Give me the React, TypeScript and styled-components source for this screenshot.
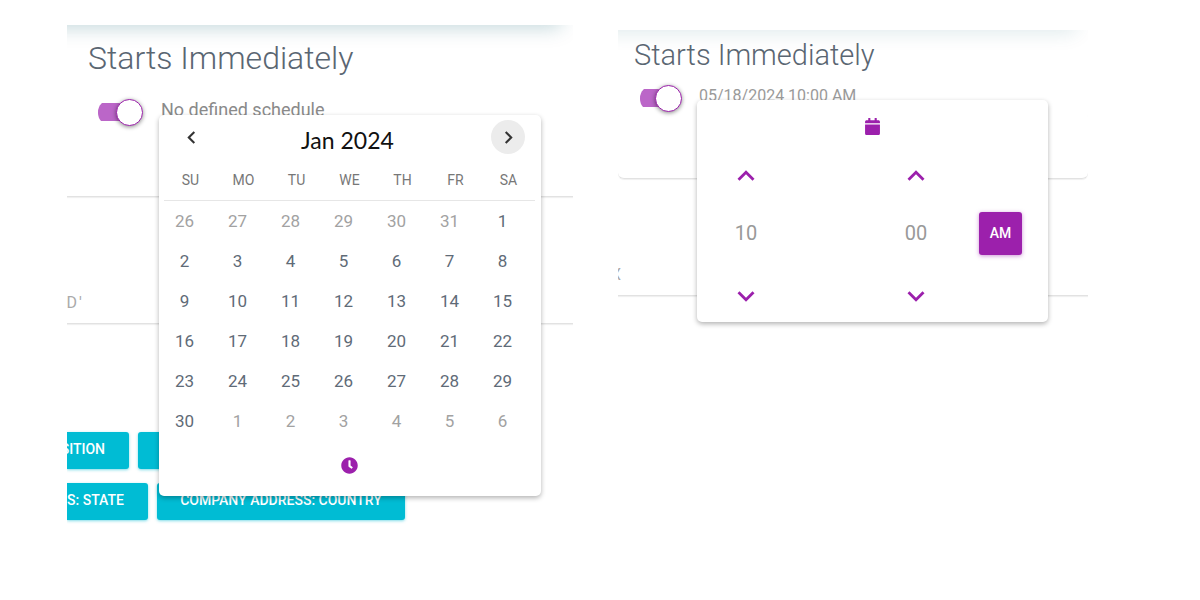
import React, { useState } from "react";
import styled, { createGlobalStyle } from "styled-components";
import {
  MdKeyboardArrowDown,
  MdKeyboardArrowLeft,
  MdKeyboardArrowRight,
  MdKeyboardArrowUp,
} from "react-icons/md";
import { FaCalendar, FaClock } from "react-icons/fa";

const purple = "#9c20ac";
const cyan = "#00bcd4";

const GlobalStyle = createGlobalStyle`
  * { box-sizing: border-box; }
  body {
    margin: 0;
    background: #fff;
    color: #5a6672;
    font-family: Roboto, "Liberation Sans", sans-serif;
  }
  button {
    margin: 0;
    padding: 0;
    border: 0;
    background: none;
    font-family: inherit;
    cursor: pointer;
  }
`;

const Page = styled.main`
  display: grid;
  grid-template-columns: 506fr 470fr;
  align-items: start;
  gap: 45px;
  padding: 25px 112px 24px 67px;
`;

const Panel = styled.section<{ $offset?: number; $strength: number }>`
  position: relative;
  overflow: hidden;
  margin-top: ${(p) => p.$offset ?? 0}px;
  padding-bottom: 40px;

  &::before {
    content: "";
    position: absolute;
    top: -20px;
    left: -20px;
    right: 12px;
    height: 20px;
    box-shadow: 0 2px 20px rgba(0, 90, 105, ${(p) => p.$strength});
  }
`;

const Title = styled.h1<{ $small?: boolean }>`
  position: relative;
  margin: 0;
  padding: ${(p) => (p.$small ? "5px 0 0 16px" : "13px 0 0 21px")};
  font-size: ${(p) => (p.$small ? 29 : 32)}px;
  line-height: 40px;
  font-weight: 300;
  white-space: nowrap;
`;

const SwitchRow = styled.label<{ $small?: boolean }>`
  display: flex;
  align-items: center;
  gap: ${(p) => (p.$small ? 17 : 18)}px;
  height: 28px;
  margin-top: ${(p) => (p.$small ? 9 : 20)}px;
  padding-left: ${(p) => (p.$small ? 22 : 31)}px;
  font-size: ${(p) => (p.$small ? 16 : 18)}px;
  line-height: 20px;
  color: ${(p) => (p.$small ? "#9a9a9a" : "#8a8a8a")};
  white-space: nowrap;
`;

const SwitchText = styled.span`
  padding-bottom: 4px;
`;

const SwitchInput = styled.input<{ $small?: boolean }>`
  appearance: none;
  display: flex;
  justify-content: flex-end;
  align-items: center;
  flex: none;
  width: ${(p) => (p.$small ? 42 : 45)}px;
  height: 25px;
  margin: 0;
  background: linear-gradient(#bb66c8, #bb66c8) left center / 38px 18px no-repeat;
  border-radius: 12px;

  &::before {
    content: "";
    width: 25px;
    height: 25px;
    border: 1px solid ${purple};
    border-radius: 50%;
    background: #fff;
    box-shadow: 0 1px 4px rgba(0, 0, 0, 0.45);
  }
  &:not(:checked)::before {
    margin-right: 20px;
  }
`;

const Card = styled.div<{ $height: number; $rounded?: boolean }>`
  display: flex;
  align-items: flex-end;
  gap: 2px;
  height: ${(p) => p.$height}px;
  padding-bottom: 10px;
  border-bottom: 1px solid #e2e2e2;
  border-radius: ${(p) => (p.$rounded ? 6 : 0)}px;
  box-shadow: 0 1px 1px #f0f0f0;
  color: #aaa;
  font-size: 16px;
  line-height: 20px;
`;

const Clipped = styled.span<{ $width: number }>`
  display: flex;
  justify-content: flex-end;
  width: ${(p) => p.$width}px;
  overflow: hidden;
`;

const TagRow = styled.div`
  display: flex;
  gap: 9px;
  margin-top: 14px;
`;

const Tag = styled.button<{ $width: number; $first?: boolean }>`
  display: flex;
  align-items: center;
  justify-content: ${(p) => (p.$first ? "flex-end" : "center")};
  overflow: hidden;
  flex: none;
  width: ${(p) => p.$width}px;
  height: 37px;
  padding-right: ${(p) => (p.$first ? 24 : 0)}px;
  padding-bottom: 4px;
  border-radius: ${(p) => (p.$first ? "0 3px 3px 0" : "3px")};
  background: ${cyan};
  box-shadow: 0 1px 3px rgba(0, 188, 212, 0.5);
  color: #fff;
  font-size: 14px;
  font-weight: 500;
  white-space: nowrap;
`;

const Popover = styled.div<{ $top: number; $left: number; $width: number }>`
  position: absolute;
  top: ${(p) => p.$top}px;
  left: ${(p) => p.$left}px;
  width: ${(p) => p.$width}px;
  border-radius: 5px;
  background: #fff;
  box-shadow: 0 2px 5px rgba(0, 0, 0, 0.3);
`;

const CalendarBody = styled.div`
  display: flex;
  flex-direction: column;
  align-items: stretch;
  padding: 5px 6px 22px 5px;
`;

const MonthBar = styled.header`
  display: flex;
  align-items: center;
  justify-content: space-between;
  padding: 0 10px;
`;

const Month = styled.h2`
  margin: 6px 4px 0 0;
  color: #111;
  font-family: Lato, sans-serif;
  font-size: 23px;
  line-height: 28px;
  font-weight: 400;
`;

const RoundButton = styled.button<{ $active?: boolean }>`
  display: flex;
  align-items: center;
  justify-content: center;
  width: 34px;
  height: 34px;
  border-radius: 50%;
  background: ${(p) => (p.$active ? "#ececec" : "transparent")};
  color: #333;
`;

const Days = styled.table`
  width: 100%;
  margin-top: 6px;
  table-layout: fixed;
  border-collapse: collapse;
  text-align: center;

  th {
    height: 40px;
    padding: 0;
    border-bottom: 1px solid #e6e6e6;
    color: #777;
    font-size: 14px;
    font-weight: 400;
  }
`;

const Day = styled.td<{ $muted: boolean }>`
  height: 40px;
  padding: 2px 12px 0 0;
  color: ${(p) => (p.$muted ? "#a2a2a2" : "#5f6b77")};
  font-size: 17px;
`;

const ClockSlot = styled.footer`
  display: flex;
  justify-content: center;
  padding-top: 17px;
`;

const ModeButton = styled.button`
  display: flex;
  align-self: center;
  justify-content: center;
  color: ${purple};
`;

const TimeBody = styled.div`
  display: flex;
  flex-direction: column;
  padding: 18px 0 4px;
`;

const TimeGrid = styled.div`
  display: grid;
  grid-template-columns: 98fr 72fr 98fr 83fr;
  grid-template-rows: 34px 80px 45px;
  align-items: center;
  justify-items: center;
  margin-top: 24px;
`;

const Step = styled.button<{ $column: number }>`
  display: flex;
  grid-column: ${(p) => p.$column};
  color: ${purple};
`;

const TimeValue = styled.span<{ $column: number }>`
  grid-column: ${(p) => p.$column};
  color: #999;
  font-size: 20px;
`;

const Meridiem = styled.button`
  grid-column: 4;
  justify-self: start;
  width: 43px;
  height: 43px;
  margin-left: 14px;
  border-radius: 3px;
  background: ${purple};
  box-shadow: 0 1px 4px rgba(156, 39, 176, 0.5);
  color: #fff;
  font-size: 14px;
  font-weight: 500;
`;

const Tags = styled.div`
  padding-top: 94px;
`;

const weekdays = ["SU", "MO", "TU", "WE", "TH", "FR", "SA"];
const weeks = [
  [26, 27, 28, 29, 30, 31, 1],
  [2, 3, 4, 5, 6, 7, 8],
  [9, 10, 11, 12, 13, 14, 15],
  [16, 17, 18, 19, 20, 21, 22],
  [23, 24, 25, 26, 27, 28, 29],
  [30, 1, 2, 3, 4, 5, 6],
];

function isOutside(week: number, day: number) {
  return (week === 0 && day > 7) || (week === 5 && day < 7);
}

function Schedule({ label, small }: { label: string; small?: boolean }) {
  const [on, setOn] = useState(true);
  return (
    <>
      <Title $small={small}>Starts Immediately</Title>
      <SwitchRow $small={small}>
        <SwitchInput $small={small} type="checkbox" checked={on} onChange={() => setOn(!on)} />
        <SwitchText>{label}</SwitchText>
      </SwitchRow>
    </>
  );
}

function DatePicker() {
  return (
    <Popover $top={90} $left={92} $width={382}>
      <CalendarBody>
        <MonthBar>
          <RoundButton aria-label="Previous month">
            <MdKeyboardArrowLeft size={25} />
          </RoundButton>
          <Month>Jan 2024</Month>
          <RoundButton $active aria-label="Next month">
            <MdKeyboardArrowRight size={25} />
          </RoundButton>
        </MonthBar>
        <Days>
          <thead>
            <tr>
              {weekdays.map((name) => (
                <th key={name} scope="col">{name}</th>
              ))}
            </tr>
          </thead>
          <tbody>
            {weeks.map((week, w) => (
              <tr key={w}>
                {week.map((day) => (
                  <Day key={day} $muted={isOutside(w, day)}>{day}</Day>
                ))}
              </tr>
            ))}
          </tbody>
        </Days>
        <ClockSlot>
          <ModeButton aria-label="Choose time">
            <FaClock size={17} />
          </ModeButton>
        </ClockSlot>
      </CalendarBody>
    </Popover>
  );
}

function TimePicker() {
  return (
    <Popover $top={70} $left={79} $width={351}>
      <TimeBody>
        <ModeButton aria-label="Choose date">
          <FaCalendar size={17} />
        </ModeButton>
        <TimeGrid>
          <Step $column={1} aria-label="Next hour"><MdKeyboardArrowUp size={34} /></Step>
          <Step $column={3} aria-label="Next minute"><MdKeyboardArrowUp size={34} /></Step>
          <TimeValue $column={1}>10</TimeValue>
          <TimeValue $column={3}>00</TimeValue>
          <Meridiem>AM</Meridiem>
          <Step $column={1} aria-label="Previous hour"><MdKeyboardArrowDown size={34} /></Step>
          <Step $column={3} aria-label="Previous minute"><MdKeyboardArrowDown size={34} /></Step>
        </TimeGrid>
      </TimeBody>
    </Popover>
  );
}

export default function App() {
  return (
    <>
      <GlobalStyle />
      <Page>
        <Panel $strength={0.26}>
          <Schedule label="No defined schedule" />
          <Card $height={71} />
          <Card $height={127}>
            <Clipped $width={10}>D</Clipped>
            <span>'</span>
          </Card>
          <Tags>
            <TagRow>
              <Tag $width={62} $first>SITION</Tag>
              <Tag $width={120} aria-label="Company" />
            </TagRow>
            <TagRow>
              <Tag $width={81} $first>S: STATE</Tag>
              <Tag $width={248}>COMPANY ADDRESS: COUNTRY</Tag>
            </TagRow>
          </Tags>
          <DatePicker />
        </Panel>
        <Panel $offset={5} $strength={0.14}>
          <Schedule label="05/18/2024 10:00 AM" small />
          <Card $height={67} $rounded />
          <Card $height={117}>
            <Clipped $width={3}>X</Clipped>
          </Card>
          <TimePicker />
        </Panel>
      </Page>
    </>
  );
}
